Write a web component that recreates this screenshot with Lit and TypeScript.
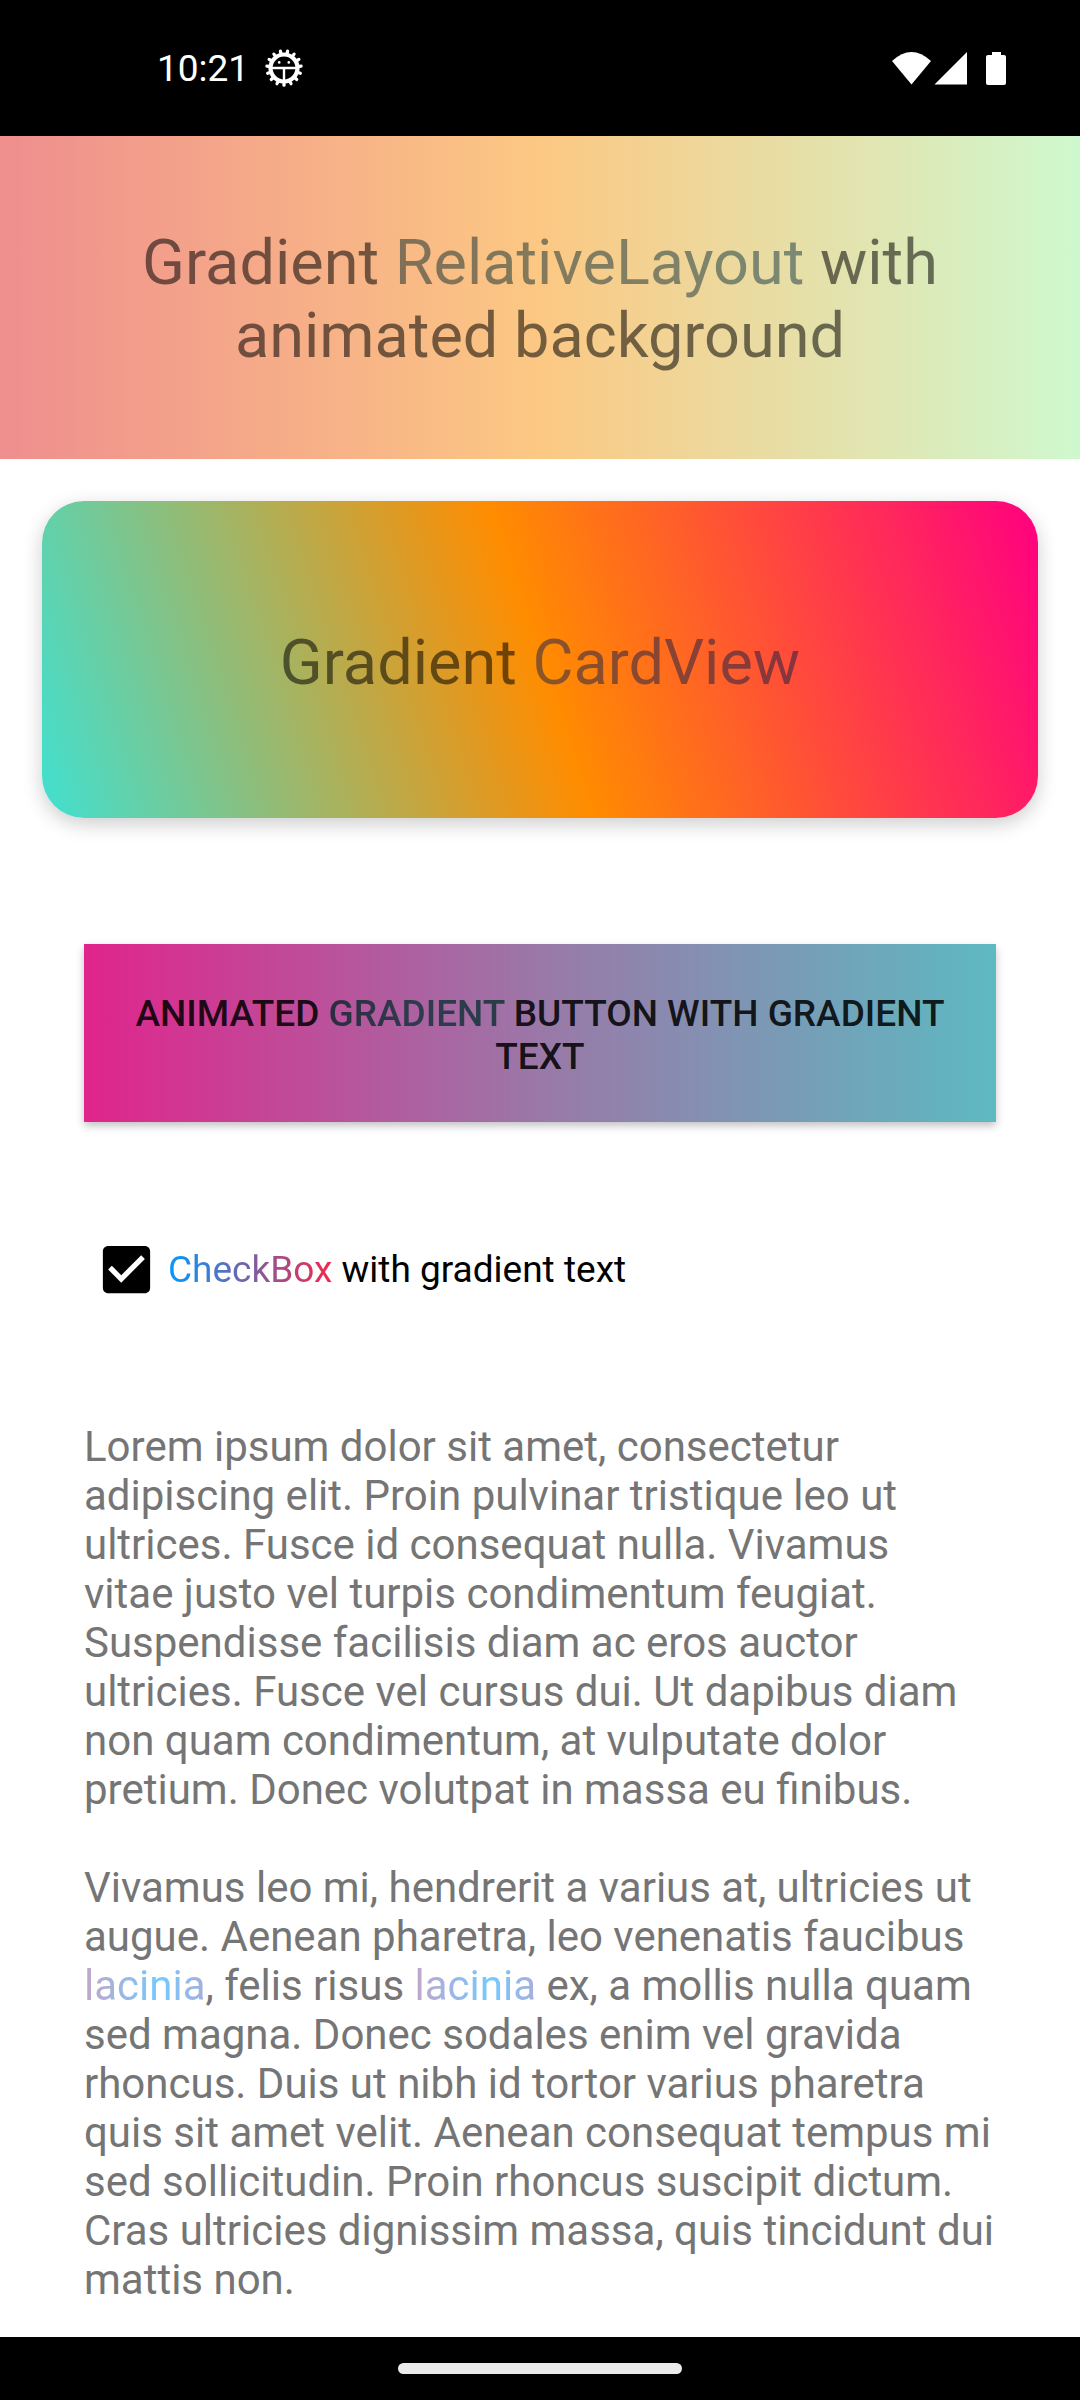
import { LitElement, html, svg, css } from "lit";
import { customElement, state } from "lit/decorators.js";

const TEETH = Array.from({ length: 15 }, (_, i) => 12 + i * 24);

@customElement("status-bar")
class StatusBar extends LitElement {
  static styles = css`
    :host {
      display: flex;
      align-items: center;
      justify-content: space-between;
      box-sizing: border-box;
      height: 136px;
      padding: 0 73px 0 157px;
      background: #000;
      color: #fff;
      font-size: 37px;
      line-height: 43px;
    }
    .left,
    .right {
      display: flex;
      align-items: center;
    }
    .left {
      gap: 16px;
    }
    .gear {
      width: 38px;
      height: 38px;
    }
    .icons {
      width: 116px;
      height: 36px;
    }
    svg {
      display: block;
    }
  `;

  render() {
    return html`
      <div class="left">
        <span>10:21</span>
        <svg class="gear" viewBox="-19 -19 38 38" aria-hidden="true">
          ${TEETH.map(
            (a) => svg`<path d="M0 -14V-17.200" transform="rotate(${a})" stroke="#fff" stroke-width="3.200" stroke-linecap="round" />`
          )}
          <circle r="13.500" fill="none" stroke="#fff" stroke-width="4.200" />
          <path d="M-13 -1.300H13V1.300H1.200V13H-1.200V1.300H-13z" fill="#fff" />
          <circle cx="-4.800" cy="-5.600" r="1.300" fill="#fff" />
          <circle cx="4.800" cy="-5.600" r="1.300" fill="#fff" />
        </svg>
      </div>
      <div class="right">
        <svg class="icons" viewBox="0 0 116 36" aria-hidden="true">
          <path d="M1 11Q20.500 -7 40 11L20.500 34.500z" fill="#fff" />
          <path d="M43.500 34.500H76V2z" fill="#fff" />
          <path d="M101 2h9v3h3q2 0 2 2v26q0 2 -2 2h-16q-2 0 -2 -2v-26q0 -2 2 -2h4z" fill="#fff" />
        </svg>
      </div>
    `;
  }
}

@customElement("app-root")
class AppRoot extends LitElement {
  @state() private checked = true;

  static styles = css`
    :host {
      display: flex;
      flex-direction: column;
      min-height: 100vh;
      background: #fff;
      font-family: Roboto, "Liberation Sans", sans-serif;
      color: #757575;
    }
    main {
      flex: 1;
    }
    h1,
    h2,
    p {
      margin: 0;
      font-weight: 400;
    }
    .banner {
      padding: 90px 84px 87px;
      background: linear-gradient(90deg, #ef8e8e, #fcc883 50%, #cff8cf);
      text-align: center;
    }
    .title {
      font-size: 63px;
      line-height: 73px;
      color: rgba(0, 0, 0, 0.54);
    }
    .card {
      margin: 42px 42px 0;
      padding: 125px 42px 119px;
      border-radius: 42px;
      background: linear-gradient(72deg, #40e0d0, #ff8c00 50%, #ff0080);
      box-shadow: 0 6px 20px rgba(0, 0, 0, 0.2);
      text-align: center;
    }
    .grad {
      background-clip: text;
      -webkit-background-clip: text;
      color: transparent;
    }
    .grad-relative {
      background-image: linear-gradient(90deg, rgba(26, 50, 50, 0.54), rgba(32, 64, 72, 0.54));
    }
    .grad-card {
      background-image: linear-gradient(90deg, rgba(40, 38, 74, 0.54), rgba(32, 32, 64, 0.54));
    }
    .grad-button {
      background-image: linear-gradient(90deg, #2b2d40, #2f3c4e 50%, #283c46);
    }
    .grad-check {
      background-image: linear-gradient(90deg, #0099ff, #f5274a);
    }
    .grad-word {
      background-image: linear-gradient(90deg, #c3a5c8, #74c9ff 62%, #a8aedb);
    }
    .action {
      display: block;
      width: calc(100% - 168px);
      margin: 126px 84px 0;
      padding: 48px 42px 44px;
      border: 0;
      background: linear-gradient(90deg, #e0248c, #9a78a8 50%, #5db9c2);
      box-shadow: 0 4px 8px rgba(0, 0, 0, 0.24);
      font-family: inherit;
      font-size: 37px;
      font-weight: 500;
      line-height: 43px;
      text-transform: uppercase;
      text-align: center;
      color: rgba(0, 0, 0, 0.87);
    }
    .check {
      display: flex;
      align-items: center;
      gap: 10px;
      margin: 116px 84px 0;
      padding: 0 0 0 11px;
      font-size: 37px;
      line-height: 43px;
      color: #000;
    }
    .box {
      display: grid;
      width: 63px;
      height: 63px;
    }
    .box input,
    .box svg {
      grid-area: 1 / 1;
      width: 100%;
      height: 100%;
      margin: 0;
    }
    .box input {
      appearance: none;
    }
    .box svg {
      pointer-events: none;
    }
    .text {
      display: flex;
      flex-direction: column;
      gap: 49px;
      padding: 121px 84px 33px;
      font-size: 42px;
      line-height: 49px;
    }
    .nav {
      display: flex;
      align-items: center;
      justify-content: center;
      height: 63px;
      background: #000;
    }
    .handle {
      width: 284px;
      height: 11px;
      border-radius: 6px;
      background: #ebebeb;
    }
  `;

  private toggle(e: Event) {
    this.checked = (e.target as HTMLInputElement).checked;
  }

  render() {
    return html`
      <status-bar></status-bar>
      <main>
        <header class="banner">
          <h1 class="title">Gradient <span class="grad grad-relative">RelativeLayout</span> with animated background</h1>
        </header>
        <section class="card">
          <h2 class="title">Gradient <span class="grad grad-card">CardView</span></h2>
        </section>
        <button class="action" type="button">
          Animated <span class="grad grad-button">gradient</span> button with gradient text
        </button>
        <label class="check">
          <span class="box">
            <input type="checkbox" .checked=${this.checked} @change=${this.toggle} />
            <svg viewBox="0 0 24 24" aria-hidden="true">
              ${this.checked
                ? svg`<path d="M19 3H5C3.890 3 3 3.900 3 5v14c0 1.100.890 2 2 2h14c1.110 0 2-.900 2-2V5C21 3.900 20.110 3 19 3zM10 17l-5-5 1.410-1.410L10 14.170l7.590-7.590L19 8z" />`
                : svg`<path d="M19 5v14H5V5h14m0-2H5c-1.100 0-2 .900-2 2v14c0 1.100.900 2 2 2h14c1.100 0 2-.900 2-2V5c0-1.100-.900-2-2-2z" />`}
            </svg>
          </span>
          <span><span class="grad grad-check">CheckBox</span> with gradient text</span>
        </label>
        <article class="text">
          <p>
            Lorem ipsum dolor sit amet, consectetur adipiscing elit. Proin pulvinar tristique leo ut ultrices. Fusce id
            consequat nulla. Vivamus<br />vitae justo vel turpis condimentum feugiat. Suspendisse facilisis diam ac eros
            auctor ultricies. Fusce vel cursus dui. Ut dapibus diam non quam condimentum, at vulputate dolor pretium.
            Donec volutpat in massa eu finibus.
          </p>
          <p>
            Vivamus leo mi, hendrerit a varius at, ultricies ut augue. Aenean pharetra, leo venenatis faucibus
            <span class="grad grad-word">lacinia</span>, felis risus <span class="grad grad-word">lacinia</span> ex, a
            mollis nulla quam sed magna. Donec sodales enim vel gravida rhoncus. Duis ut nibh id tortor varius pharetra
            quis sit amet velit. Aenean consequat tempus mi sed sollicitudin. Proin rhoncus suscipit dictum. Cras
            ultricies dignissim massa, quis tincidunt dui mattis non.
          </p>
        </article>
      </main>
      <div class="nav"><div class="handle"></div></div>
    `;
  }
}
